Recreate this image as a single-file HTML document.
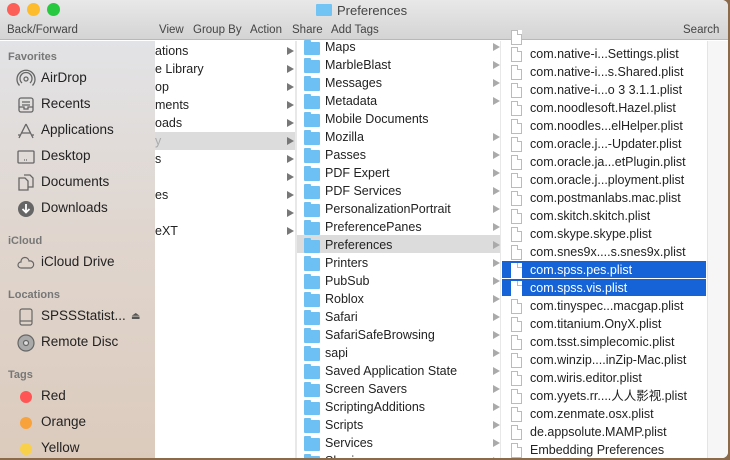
<!DOCTYPE html>
<html><head><meta charset="utf-8"><style>
*{margin:0;padding:0;box-sizing:border-box}
body{width:730px;height:460px;overflow:hidden;background:#8a6a4a;font-family:"Liberation Sans","Noto Sans CJK SC",sans-serif;font-size:12.5px;color:#222;position:relative}
.win{position:absolute;left:0;top:0;width:728px;height:458px;background:#fff;border-radius:0 6px 6px 0;overflow:hidden}
.tb{position:absolute;left:0;top:0;width:728px;height:40px;background:linear-gradient(#e8e8e8,#d4d4d4);border-bottom:1px solid #b8b8b8}
.tl{position:absolute;top:3px;width:13px;height:13px;border-radius:50%}
.t{position:absolute;font-size:11.5px;color:#444}
.side{position:absolute;left:0;top:41px;width:155px;height:417px;background:linear-gradient(#e2e3e6,#e0d6cf 45%,#dccbbd);}
.sh{position:absolute;left:8px;font-size:11px;color:#777;font-weight:bold}
.si{position:absolute;left:41px;font-size:13.5px;color:#222}
.ic{position:absolute;left:16px}
.row{position:absolute;height:18px;line-height:18px;font-size:12.5px;white-space:nowrap}
.arr{position:absolute;width:0;height:0;border-left:7px solid #777;border-top:4px solid transparent;border-bottom:4px solid transparent}
.fold{position:absolute;width:16px;height:13px;background:#6cc0f4;border-radius:1px}
.fold:before{content:"";position:absolute;left:0;top:-2px;width:7px;height:3px;background:#6cc0f4;border-radius:1px 1px 0 0}
.file{position:absolute;width:11px;height:15px;border:1px solid #bbb;background:#fff}
.file:after{content:"";position:absolute;right:-1px;top:-1px;width:4px;height:4px;background:#fff;border-left:1px solid #bbb;border-bottom:1px solid #bbb}
</style></head><body>
<div class="win">
<div class="tb">
<div class="tl" style="left:7px;background:#fc5f57"></div>
<div class="tl" style="left:27px;background:#fdbc2e"></div>
<div class="tl" style="left:47px;background:#28c840"></div>
<div style="position:absolute;left:316px;top:4px;width:16px;height:12px;background:#72c4f4;border-radius:1px"></div>
<div class="t" style="left:337px;top:3px;font-size:13px;color:#444">Preferences</div>
<div class="t" style="left:7px;top:24px">Back/Forward</div>
<div class="t" style="left:159px;top:24px">View</div>
<div class="t" style="left:193px;top:24px">Group By</div>
<div class="t" style="left:250px;top:24px">Action</div>
<div class="t" style="left:292px;top:24px">Share</div>
<div class="t" style="left:331px;top:24px">Add Tags</div>
<div class="t" style="left:683px;top:24px">Search</div>
</div>
<div class="side">
<div class="sh" style="top:10px">Favorites</div>
<div class="sh" style="top:194px">iCloud</div>
<div class="sh" style="top:248px">Locations</div>
<div class="sh" style="top:328px">Tags</div>
<svg class="ic" style="top:28px" width="20" height="20" viewBox="0 0 20 20" fill="none" stroke="#666" stroke-width="1.3"><circle cx="10" cy="10" r="2"/><path d="M6 14a6 6 0 1 1 8 0M3.5 16.5a9 9 0 1 1 13 0"/></svg>
<div class="si" style="top:29px">AirDrop</div>
<svg class="ic" style="top:54px" width="20" height="20" viewBox="0 0 20 20" fill="none" stroke="#666" stroke-width="1.3"><rect x="3" y="3" width="14" height="14" rx="2"/><path d="M6 7h8M6 10h8M3 12h5v2h4v-2h5"/></svg>
<div class="si" style="top:55px">Recents</div>
<svg class="ic" style="top:80px" width="20" height="20" viewBox="0 0 20 20" fill="none" stroke="#666" stroke-width="1.3"><path d="M10 3L3 17M10 3l7 14M6 12h8M2 14h3M15 14h3"/></svg>
<div class="si" style="top:81px">Applications</div>
<svg class="ic" style="top:106px" width="20" height="20" viewBox="0 0 20 20" fill="none" stroke="#666" stroke-width="1.3"><rect x="2" y="4" width="16" height="12" rx="1"/><path d="M8 13h4" stroke-dasharray="1 1"/></svg>
<div class="si" style="top:107px">Desktop</div>
<svg class="ic" style="top:132px" width="20" height="20" viewBox="0 0 20 20" fill="none" stroke="#666" stroke-width="1.3"><path d="M3 5h6l3 3v9H3zM8 2h6l3 3v9h-5"/></svg>
<div class="si" style="top:133px">Documents</div>
<svg class="ic" style="top:158px" width="20" height="20" viewBox="0 0 20 20"><circle cx="10" cy="10" r="8" fill="#666"/><path d="M10 5v8M6.5 10l3.5 3.5 3.5-3.5" stroke="#fff" stroke-width="1.8" fill="none"/></svg>
<div class="si" style="top:159px">Downloads</div>
<svg class="ic" style="top:212px" width="20" height="20" viewBox="0 0 20 20" fill="none" stroke="#666" stroke-width="1.2"><path d="M5 15a3 3 0 0 1 0-6a4 4 0 0 1 8-1a3.5 3.5 0 0 1 2 7z"/></svg>
<div class="si" style="top:213px">iCloud Drive</div>
<svg class="ic" style="top:266px" width="20" height="20" viewBox="0 0 20 20" fill="none" stroke="#666" stroke-width="1.2"><rect x="4" y="2" width="12" height="16" rx="2"/><path d="M4 14h12"/></svg>
<div class="si" style="top:267px">SPSSStatist...</div>
<div style="position:absolute;left:131px;top:270px;font-size:10px;color:#555">⏏</div>
<svg class="ic" style="top:292px" width="20" height="20" viewBox="0 0 20 20" fill="#aaa" stroke="#666" stroke-width="1.2"><circle cx="10" cy="10" r="8"/><circle cx="10" cy="10" r="2.5" fill="#ddd"/></svg>
<div class="si" style="top:293px">Remote Disc</div>
<div style="position:absolute;left:20px;top:350px;width:12px;height:12px;border-radius:50%;background:#f55"></div>
<div class="si" style="top:347px">Red</div>
<div style="position:absolute;left:20px;top:376px;width:12px;height:12px;border-radius:50%;background:#f8a23c"></div>
<div class="si" style="top:373px">Orange</div>
<div style="position:absolute;left:20px;top:402px;width:12px;height:12px;border-radius:50%;background:#f8d04a"></div>
<div class="si" style="top:399px">Yellow</div>
</div>
<div style="position:absolute;left:295px;top:41px;width:2px;height:417px;background:#e8e8e8"></div>
<div style="position:absolute;left:500px;top:41px;width:1px;height:417px;background:#e8e8e8"></div>
<div style="position:absolute;left:707px;top:41px;width:21px;height:417px;background:#f6f6f6;border-left:1px solid #e4e4e4"></div>
<div id="c1"></div>
</div>
<script>
var c1=["ations","e Library","op","ments","oads","y","s","","es","","eXT"];
var h='';
c1.forEach(function(t,i){var y=42+i*18;
if(i==5)h+='<div class="row" style="left:155px;top:'+y+'px;width:140px;background:#dcdcdc"></div>';
h+='<div class="row" style="left:155px;top:'+y+'px;color:'+(i==5?'#aaa':'#222')+'">'+t+'</div><div class="arr" style="left:287px;top:'+(y+5)+'px"></div>';});
var c2=["Maps","MarbleBlast","Messages","Metadata","Mobile Documents","Mozilla","Passes","PDF Expert","PDF Services","PersonalizationPortrait","PreferencePanes","Preferences","Printers","PubSub","Roblox","Safari","SafariSafeBrowsing","sapi","Saved Application State","Screen Savers","ScriptingAdditions","Scripts","Services","Sharing"];
c2.forEach(function(t,i){var y=38+i*18;
if(i==11)h+='<div class="row" style="left:297px;top:'+(y-1)+'px;width:203px;background:#dcdcdc"></div>';
h+='<div class="fold" style="left:304px;top:'+(y+4)+'px"></div><div class="row" style="left:325px;top:'+y+'px">'+t+'</div>';
if(i!=4)h+='<div class="arr" style="left:493px;top:'+(y+5)+'px;border-left-color:#aaa"></div>';});
var c3=["com.native-i...Settings.plist","com.native-i...s.Shared.plist","com.native-i...o 3 3.1.1.plist","com.noodlesoft.Hazel.plist","com.noodles...elHelper.plist","com.oracle.j...-Updater.plist","com.oracle.ja...etPlugin.plist","com.oracle.j...ployment.plist","com.postmanlabs.mac.plist","com.skitch.skitch.plist","com.skype.skype.plist","com.snes9x....s.snes9x.plist","com.spss.pes.plist","com.spss.vis.plist","com.tinyspec...macgap.plist","com.titanium.OnyX.plist","com.tsst.simplecomic.plist","com.winzip....inZip-Mac.plist","com.wiris.editor.plist","com.yyets.rr....人人影视.plist","com.zenmate.osx.plist","de.appsolute.MAMP.plist","Embedding Preferences"];
h+='<div class="file" style="left:511px;top:30px"></div>';
c3.forEach(function(t,i){var y=45+i*18;var s=(i==12||i==13);
if(s)h+='<div class="row" style="left:502px;top:'+(y-0.5)+'px;width:204px;height:17px;background:#1563d6"></div>';
h+='<div class="file" style="left:511px;top:'+(y+2)+'px;'+(s?'border-color:#fff':'')+'"></div><div class="row" style="left:530px;top:'+y+'px;'+(s?'color:#fff':'')+'">'+t+'</div>';});
document.getElementById('c1').innerHTML=h;
</script>
</body></html>
